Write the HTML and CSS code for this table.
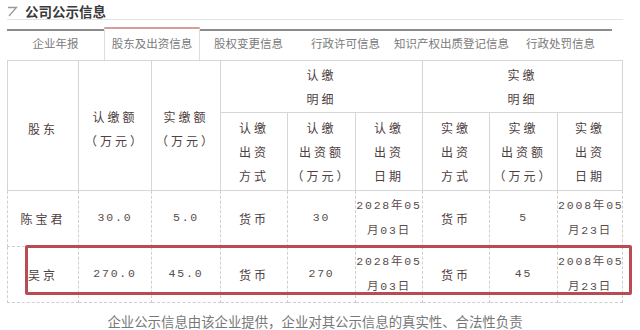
FILE: index.html
```html
<!DOCTYPE html>
<html lang="zh-CN">
<head>
    <meta charset="UTF-8">
    <title>公司公示信息</title>
    <link rel="stylesheet" href="styles.css">
</head>
<body>
    <div class="page">
        <!-- Title -->
        <div class="title-bar">
            <svg class="title-icon" width="11" height="11" viewBox="0 0 11 11">
                <path d="M1 1.5 H9.5 L2 10" fill="none" stroke="#999" stroke-width="1.3"/>
            </svg>
            <span class="title-text">公司公示信息</span>
        </div>

        <!-- Tabs -->
        <div class="tabs">
            <div class="tab" style="width:98px">企业年报</div>
            <div class="tab active" style="width:97px">股东及出资信息</div>
            <div class="tab" style="width:98px">股权变更信息</div>
            <div class="tab" style="width:98px">行政许可信息</div>
            <div class="tab" style="width:115px">知识产权出质登记信息</div>
            <div class="tab" style="width:104px">行政处罚信息</div>
        </div>

        <!-- Table -->
        <div class="table-wrap">
            <table class="info-table">
                <colgroup>
                    <col style="width:71px"><col style="width:73px"><col style="width:69px">
                    <col style="width:67px"><col style="width:68px"><col style="width:67px">
                    <col style="width:67px"><col style="width:68px"><col style="width:65px">
                </colgroup>
                <thead>
                    <tr class="head-top">
                        <th rowspan="2">股东</th>
                        <th rowspan="2">认缴额<br>（万元）</th>
                        <th rowspan="2">实缴额<br>（万元）</th>
                        <th colspan="3">认缴<br>明细</th>
                        <th colspan="3">实缴<br>明细</th>
                    </tr>
                    <tr class="head-sub">
                        <th>认缴<br>出资<br>方式</th>
                        <th>认缴<br>出资额<br>（万元）</th>
                        <th>认缴<br>出资<br>日期</th>
                        <th>实缴<br>出资<br>方式</th>
                        <th>实缴<br>出资额<br>（万元）</th>
                        <th>实缴<br>出资<br>日期</th>
                    </tr>
                </thead>
                <tbody>
                    <tr>
                        <td>陈宝君</td>
                        <td class="num">30.0</td>
                        <td class="num">5.0</td>
                        <td>货币</td>
                        <td class="num">30</td>
                        <td class="num">2028年05<br>月03日</td>
                        <td>货币</td>
                        <td class="num">5</td>
                        <td class="num">2008年05<br>月23日</td>
                    </tr>
                    <tr>
                        <td>吴京</td>
                        <td class="num">270.0</td>
                        <td class="num">45.0</td>
                        <td>货币</td>
                        <td class="num">270</td>
                        <td class="num">2028年05<br>月03日</td>
                        <td>货币</td>
                        <td class="num">45</td>
                        <td class="num">2008年05<br>月23日</td>
                    </tr>
                </tbody>
            </table>
            <div class="highlight"></div>
        </div>

        <p class="footer-note">企业公示信息由该企业提供，企业对其公示信息的真实性、合法性负责</p>
    </div>
</body>
</html>
```

FILE: styles.css
```css
body {
    margin: 0;
    background-color: #fff;
    font-family: "Noto Sans CJK SC", "Noto Sans", sans-serif;
}
.page {
    width: 640px;
    height: 330px;
    overflow: hidden;
    padding-left: 7px;
    box-sizing: border-box;
}
.title-bar {
    display: flex;
    align-items: center;
    gap: 7px;
    height: 20px;
    width: 616px;
    border-bottom: 1px solid #e3e3e3;
    box-sizing: border-box;
    padding-top: 3px;
}
.title-icon {
    display: block;
}
.title-text {
    font-size: 13.5px;
    font-weight: bold;
    color: #3a3a3a;
    line-height: 16px;
}
.tabs {
    display: flex;
    margin-top: 9px;
    width: 605px;
    height: 31px;
    border-top: 2px solid #8c8c8c;
    box-sizing: border-box;
}
.tab {
    font-size: 11.5px;
    color: #7a7a7a;
    text-align: center;
    line-height: 25px;
    box-sizing: border-box;
    white-space: nowrap;
}
.tab.active {
    margin-top: -4px;
    height: 33px;
    line-height: 29px;
    background-color: #fff;
    border-top: 2px solid #d99a9a;
    border-left: 1px solid #ddd;
    border-right: 1px solid #ddd;
    position: relative;
    z-index: 1;
}
.table-wrap {
    position: relative;
}
.info-table {
    width: 615px;
    border-collapse: collapse;
    table-layout: fixed;
    color: #4e4040;
    font-size: 12px;
}
.info-table th {
    font-weight: normal;
    border: 1px solid #d6d6d6;
    line-height: 24px;
    letter-spacing: 3px;
    padding: 0;
    text-align: center;
}
.head-top th {
    height: 50px;
    padding-top: 1px;
}
.head-top th[rowspan] {
    padding-top: 6px;
}
.head-sub th {
    height: 76px;
    padding-top: 1px;
}
.info-table td {
    border: 1px dashed #cfcfcf;
    height: 53px;
    padding: 0;
    line-height: 25px;
    text-align: center;
    letter-spacing: 3px;
    white-space: nowrap;
}
.info-table td.num {
    font-family: "Liberation Mono", "Noto Sans CJK SC", monospace;
    font-size: 11.5px;
    color: #5a4c4c;
    letter-spacing: 1.8px;
    padding-bottom: 2px;
}
.highlight {
    position: absolute;
    left: 18px;
    top: 185px;
    width: 607px;
    height: 50px;
    border: 3px solid #b84c52;
    border-radius: 2px;
    box-sizing: border-box;
}
.footer-note {
    margin: 9px 0 0;
    width: 616px;
    line-height: 18px;
    text-align: center;
    font-size: 13.4px;
    color: #777;
    white-space: nowrap;
}
```
